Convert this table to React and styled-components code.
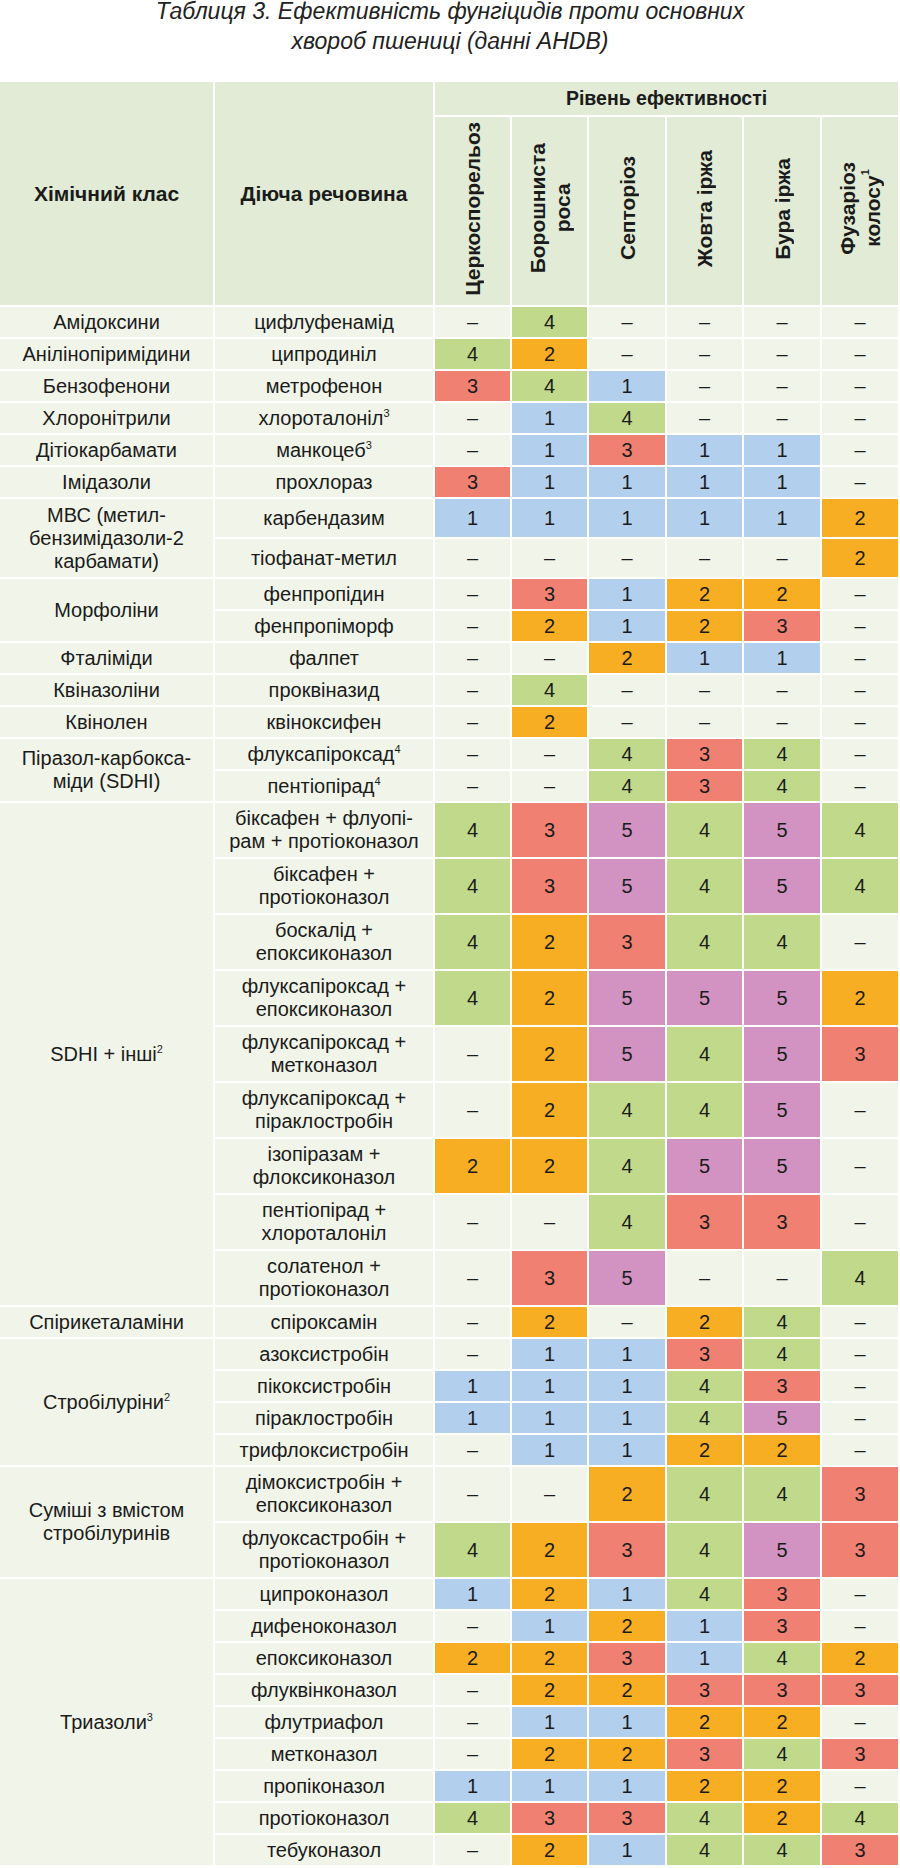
import React from "react";
import styled, { createGlobalStyle } from "styled-components";

const GlobalStyle = createGlobalStyle`
  html, body {
    margin: 0;
    padding: 0;
    background: #fff;
  }
  body {
    font-family: "Liberation Sans", Arial, Helvetica, sans-serif;
    color: #1b1b1b;
    overflow-x: hidden;
  }
`;

const COLORS = {
  1: "#b2cfee",
  2: "#f8ae22",
  3: "#f08172",
  4: "#c0d98a",
  5: "#d393c2",
};

const Page = styled.div`
  width: 900px;
`;

const Title = styled.h1`
  margin: -4px 0 0;
  font-size: 23px;
  line-height: 30px;
  font-weight: normal;
  font-style: italic;
  text-align: center;
  color: #222;
`;

const Table = styled.table`
  margin: 24px 0 0 -2px;
  width: 902px;
  table-layout: fixed;
  border-collapse: separate;
  border-spacing: 2px;
`;

const Row = styled.tr`
  height: ${(p) => p.$h}px;
`;

const HeadCell = styled.th`
  background: #e1ebd5;
  font-size: ${(p) => p.$size || 21}px;
  font-weight: bold;
  text-align: center;
  vertical-align: middle;
  padding: 0;
  color: #1b1b1b;
`;

const VerticalLabel = styled.div`
  display: inline-block;
  writing-mode: vertical-rl;
  transform: rotate(180deg);
  line-height: 25px;
  text-align: center;
  white-space: nowrap;
`;

const BodyCell = styled.td`
  background: ${(p) => (p.$score ? COLORS[p.$score] : "#f1f5e9")};
  font-size: 20px;
  line-height: 23px;
  text-align: center;
  vertical-align: middle;
  padding: 0;
`;

const Sup = styled.sup`
  font-size: 11px;
  line-height: 0;
  vertical-align: 8px;
`;

const diseases = [
  "Церкоспорельоз",
  <>Борошниста<br />роса</>,
  "Септоріоз",
  "Жовта іржа",
  "Бура іржа",
  <>Фузаріоз<br />колосу<Sup>1</Sup></>,
];

// [клас, речовини: [назва, висота рядка, оцінки]]
const groups = [
  ["Амідоксини", [["цифлуфенамід", 30, "-4----"]]],
  ["Анілінопіримідини", [["ципродиніл", 30, "42----"]]],
  ["Бензофенони", [["метрофенон", 30, "341---"]]],
  ["Хлоронітрили", [[<>хлороталоніл<Sup>3</Sup></>, 30, "-14---"]]],
  ["Дітіокарбамати", [[<>манкоцеб<Sup>3</Sup></>, 30, "-1311-"]]],
  ["Імідазоли", [["прохлораз", 30, "31111-"]]],
  [
    <>МВС (метил-<br />бензимідазоли-2<br />карбамати)</>,
    [
      ["карбендазим", 38, "111112"],
      ["тіофанат-метил", 38, "-----2"],
    ],
  ],
  [
    "Морфоліни",
    [
      ["фенпропідин", 30, "-3122-"],
      ["фенпропіморф", 30, "-2123-"],
    ],
  ],
  ["Фталіміди", [["фалпет", 30, "--211-"]]],
  ["Квіназоліни", [["проквіназид", 30, "-4----"]]],
  ["Квінолен", [["квіноксифен", 30, "-2----"]]],
  [
    <>Піразол-карбокса-<br />міди (SDHI)</>,
    [
      [<>флуксапіроксад<Sup>4</Sup></>, 30, "--434-"],
      [<>пентіопірад<Sup>4</Sup></>, 30, "--434-"],
    ],
  ],
  [
    <>SDHI + інші<Sup>2</Sup></>,
    [
      [<>біксафен + флуопі-<br />рам + протіоконазол</>, 54, "435454"],
      [<>біксафен +<br />протіоконазол</>, 54, "435454"],
      [<>боскалід +<br />епоксиконазол</>, 54, "42344-"],
      [<>флуксапіроксад +<br />епоксиконазол</>, 54, "425552"],
      [<>флуксапіроксад +<br />метконазол</>, 54, "-25453"],
      [<>флуксапіроксад +<br />піраклостробін</>, 54, "-2445-"],
      [<>ізопіразам +<br />флоксиконазол</>, 54, "22455-"],
      [<>пентіопірад +<br />хлороталоніл</>, 54, "--433-"],
      [<>солатенол +<br />протіоконазол</>, 54, "-35--4"],
    ],
  ],
  ["Спірикеталаміни", [["спіроксамін", 30, "-2-24-"]]],
  [
    <>Стробілуріни<Sup>2</Sup></>,
    [
      ["азоксистробін", 30, "-1134-"],
      ["пікоксистробін", 30, "11143-"],
      ["піраклостробін", 30, "11145-"],
      ["трифлоксистробін", 30, "-1122-"],
    ],
  ],
  [
    <>Суміші з вмістом<br />стробілуринів</>,
    [
      [<>дімоксистробін +<br />епоксиконазол</>, 54, "--2443"],
      [<>флуоксастробін +<br />протіоконазол</>, 54, "423453"],
    ],
  ],
  [
    <>Триазоли<Sup>3</Sup></>,
    [
      ["ципроконазол", 30, "12143-"],
      ["дифеноконазол", 30, "-1213-"],
      ["епоксиконазол", 30, "223142"],
      ["флуквінконазол", 30, "-22333"],
      ["флутриафол", 30, "-1122-"],
      ["метконазол", 30, "-22343"],
      ["пропіконазол", 30, "11122-"],
      ["протіоконазол", 30, "433424"],
      ["тебуконазол", 30, "-21443"],
    ],
  ],
];

const widths = [213, 218, 75, 75, 76, 75, 76, 76];

export default function App() {
  return (
    <Page>
      <GlobalStyle />
      <Title>
        Таблиця 3. Ефективність фунгіцидів проти основних
        <br />
        хвороб пшениці (данні AHDB)
      </Title>
      <Table>
        <colgroup>
          {widths.map((w, i) => (
            <col key={i} style={{ width: w }} />
          ))}
        </colgroup>
        <thead>
          <Row $h={33}>
            <HeadCell rowSpan={2}>Хімічний клас</HeadCell>
            <HeadCell rowSpan={2}>Діюча речовина</HeadCell>
            <HeadCell colSpan={6} $size={19.5}>
              Рівень ефективності
            </HeadCell>
          </Row>
          <Row $h={188}>
            {diseases.map((d, i) => (
              <HeadCell key={i}>
                <VerticalLabel>{d}</VerticalLabel>
              </HeadCell>
            ))}
          </Row>
        </thead>
        <tbody>
          {groups.map(([cls, items], gi) =>
            items.map(([name, h, scores], ri) => (
              <Row key={`${gi}-${ri}`} $h={h}>
                {ri === 0 && <BodyCell rowSpan={items.length}>{cls}</BodyCell>}
                <BodyCell>{name}</BodyCell>
                {scores.split("").map((s, si) =>
                  s === "-" ? (
                    <BodyCell key={si}>–</BodyCell>
                  ) : (
                    <BodyCell key={si} $score={s}>
                      {s}
                    </BodyCell>
                  )
                )}
              </Row>
            ))
          )}
        </tbody>
      </Table>
    </Page>
  );
}
